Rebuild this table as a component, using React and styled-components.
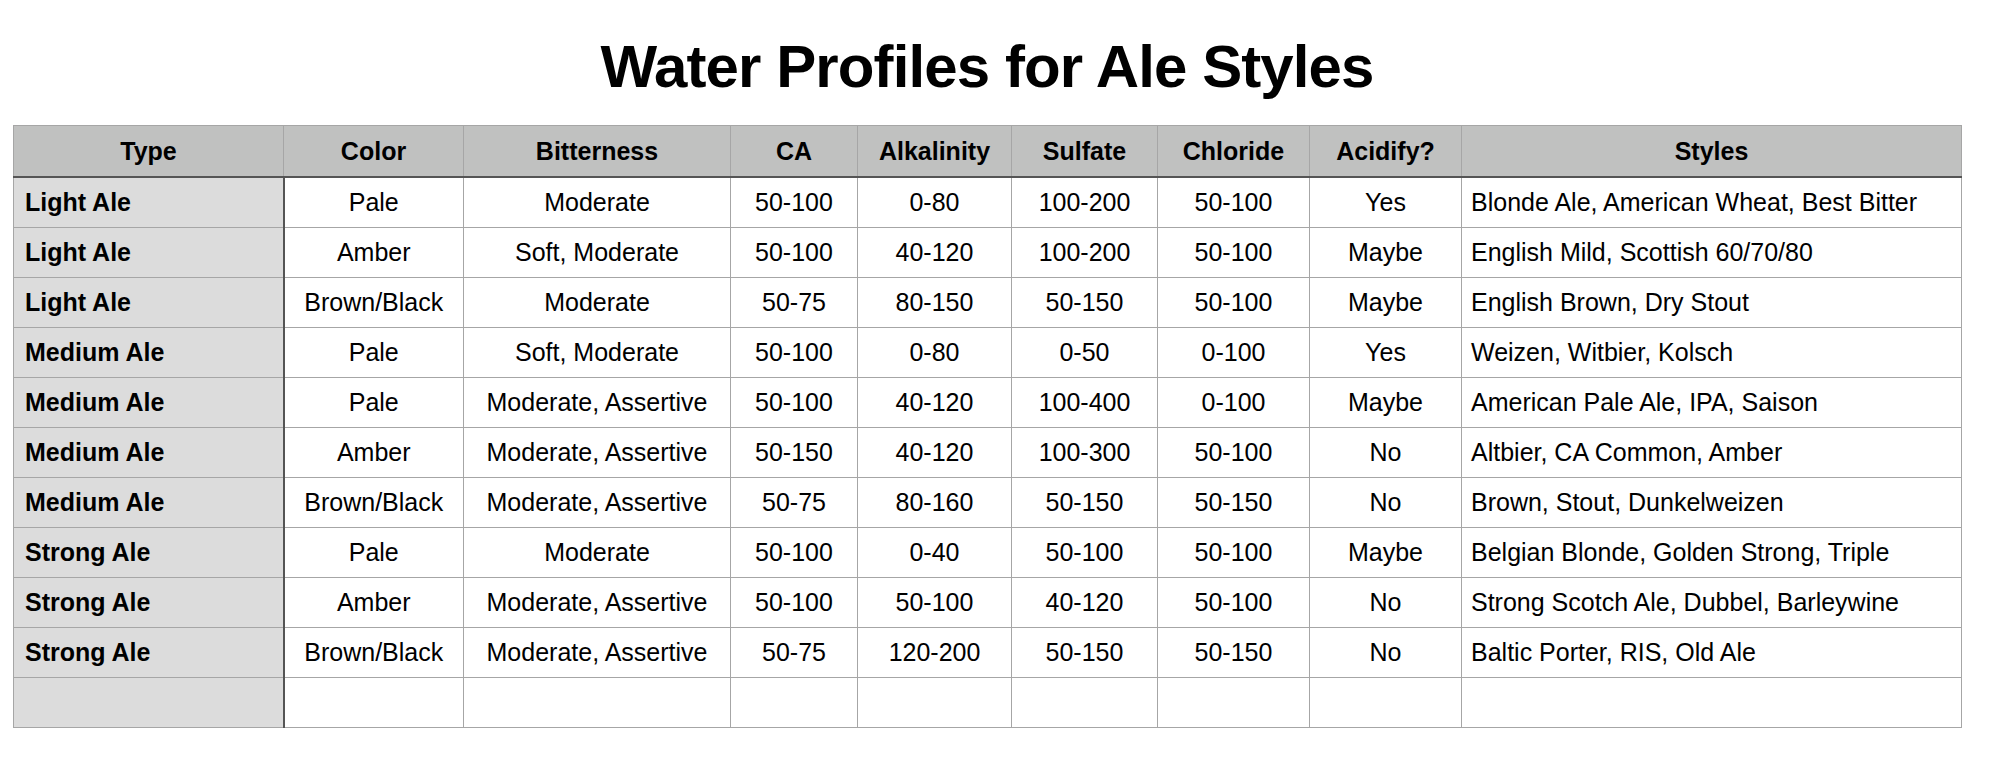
import React from 'react';
import styled, { createGlobalStyle } from 'styled-components';

const columns = [
  { key: 'type', label: 'Type', width: 270 },
  { key: 'color', label: 'Color', width: 180 },
  { key: 'bitterness', label: 'Bitterness', width: 267 },
  { key: 'ca', label: 'CA', width: 127 },
  { key: 'alkalinity', label: 'Alkalinity', width: 154 },
  { key: 'sulfate', label: 'Sulfate', width: 146 },
  { key: 'chloride', label: 'Chloride', width: 152 },
  { key: 'acidify', label: 'Acidify?', width: 152 },
  { key: 'styles', label: 'Styles', width: 500 },
];

const rows = [
  ['Light Ale', 'Pale', 'Moderate', '50-100', '0-80', '100-200', '50-100', 'Yes', 'Blonde Ale, American Wheat, Best Bitter'],
  ['Light Ale', 'Amber', 'Soft, Moderate', '50-100', '40-120', '100-200', '50-100', 'Maybe', 'English Mild, Scottish 60/70/80'],
  ['Light Ale', 'Brown/Black', 'Moderate', '50-75', '80-150', '50-150', '50-100', 'Maybe', 'English Brown, Dry Stout'],
  ['Medium Ale', 'Pale', 'Soft, Moderate', '50-100', '0-80', '0-50', '0-100', 'Yes', 'Weizen, Witbier, Kolsch'],
  ['Medium Ale', 'Pale', 'Moderate, Assertive', '50-100', '40-120', '100-400', '0-100', 'Maybe', 'American Pale Ale, IPA, Saison'],
  ['Medium Ale', 'Amber', 'Moderate, Assertive', '50-150', '40-120', '100-300', '50-100', 'No', 'Altbier, CA Common, Amber'],
  ['Medium Ale', 'Brown/Black', 'Moderate, Assertive', '50-75', '80-160', '50-150', '50-150', 'No', 'Brown, Stout, Dunkelweizen'],
  ['Strong Ale', 'Pale', 'Moderate', '50-100', '0-40', '50-100', '50-100', 'Maybe', 'Belgian Blonde, Golden Strong, Triple'],
  ['Strong Ale', 'Amber', 'Moderate, Assertive', '50-100', '50-100', '40-120', '50-100', 'No', 'Strong Scotch Ale, Dubbel, Barleywine'],
  ['Strong Ale', 'Brown/Black', 'Moderate, Assertive', '50-75', '120-200', '50-150', '50-150', 'No', 'Baltic Porter, RIS, Old Ale'],
  ['', '', '', '', '', '', '', '', ''],
];

const GlobalStyle = createGlobalStyle`
  body {
    margin: 0;
    background: #fff;
    font-family: "Liberation Sans", Arial, sans-serif;
    color: #000;
  }
`;

const Page = styled.div`
  width: 1948px;
  padding: 37px 0 0 13px;
`;

const Title = styled.h1`
  margin: 0 0 28px;
  font-size: 60px;
  line-height: 60px;
  font-weight: 700;
  letter-spacing: -0.9px;
  text-align: center;
`;

const Table = styled.table`
  width: 1948px;
  border-collapse: collapse;
  table-layout: fixed;
  font-size: 25px;
`;

const HeadCell = styled.th`
  height: 50px;
  padding: 0;
  background: #c0c1c0;
  font-weight: 700;
  text-align: center;
  border: 1px solid #a6a6a6;
  border-bottom: 2px solid #555;
`;

const Row = styled.tr`
  height: 50px;
`;

const TypeCell = styled.td`
  padding: 0 0 0 11px;
  background: #dcdcdc;
  font-weight: 700;
  text-align: left;
  border: 1px solid #a6a6a6;
  border-right: 2px solid #555;
  white-space: nowrap;
`;

const Cell = styled.td`
  padding: ${(p) => (p.$left ? '0 0 0 9px' : '0')};
  text-align: ${(p) => (p.$left ? 'left' : 'center')};
  border: 1px solid #a6a6a6;
  white-space: nowrap;
`;

export default function App() {
  return (
    <>
      <GlobalStyle />
      <Page>
        <Title>Water Profiles for Ale Styles</Title>
        <Table>
          <colgroup>
            {columns.map((c) => (
              <col key={c.key} style={{ width: c.width }} />
            ))}
          </colgroup>
          <thead>
            <tr>
              {columns.map((c) => (
                <HeadCell key={c.key}>{c.label}</HeadCell>
              ))}
            </tr>
          </thead>
          <tbody>
            {rows.map((r, i) => (
              <Row key={i}>
                <TypeCell>{r[0]}</TypeCell>
                {r.slice(1).map((v, j) => (
                  <Cell key={j} $left={j === r.length - 2}>
                    {v}
                  </Cell>
                ))}
              </Row>
            ))}
          </tbody>
        </Table>
      </Page>
    </>
  );
}
